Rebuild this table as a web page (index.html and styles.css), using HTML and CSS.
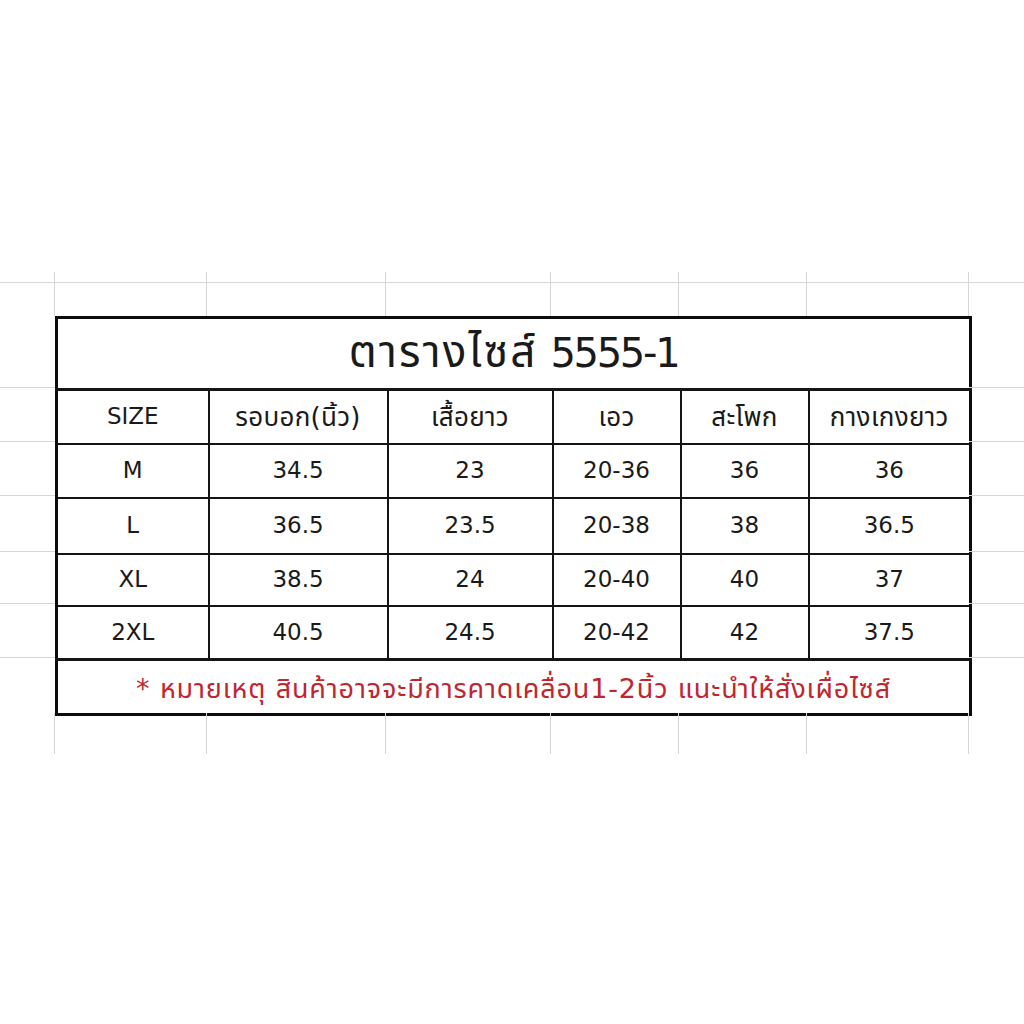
FILE: index.html
```html
<!DOCTYPE html>
<html lang="th">
<head>
<meta charset="utf-8">
<title>ตารางไซส์ 5555-1</title>
<link rel="stylesheet" href="styles.css">
</head>
<body>
<div class="sheet">
  <!-- row 1 : top stub of gridlines -->
  <div class="g gv"></div><div class="g gv"></div><div class="g gv"></div><div class="g gv"></div>
  <div class="g gv"></div><div class="g gv"></div><div class="g gv"></div><div class="g"></div>
  <!-- row 2 -->
  <div class="g gv gh"></div><div class="g gv gh"></div><div class="g gv gh"></div><div class="g gv gh"></div>
  <div class="g gv gh"></div><div class="g gv gh"></div><div class="g gv gh"></div><div class="g gh"></div>

  <!-- left gutter -->
  <div class="gut gut-l r3"></div>
  <div class="gut gut-l r4"></div>
  <div class="gut gut-l r5"></div>
  <div class="gut gut-l r6"></div>
  <div class="gut gut-l r7"></div>
  <div class="gut gut-l r8"></div>
  <div class="gut gut-l r9"></div>

  <table class="size-table">
    <colgroup>
      <col class="c1"><col class="c2"><col class="c3"><col class="c4"><col class="c5"><col class="c6">
    </colgroup>
    <tr class="row-title"><td colspan="6" class="title"><span class="title-th">ตารางไซส์</span> <span class="title-num">5555-1</span></td></tr>
    <tr class="row-54 head"><td>SIZE</td><td class="th">รอบอก(นิ้ว)</td><td class="th">เสื้อยาว</td><td class="th">เอว</td><td class="th">สะโพก</td><td class="th">กางเกงยาว</td></tr>
    <tr class="row-54"><td>M</td><td>34.5</td><td>23</td><td>20-36</td><td>36</td><td>36</td></tr>
    <tr class="row-56"><td>L</td><td>36.5</td><td>23.5</td><td>20-38</td><td>38</td><td>36.5</td></tr>
    <tr class="row-52"><td>XL</td><td>38.5</td><td>24</td><td>20-40</td><td>40</td><td>37</td></tr>
    <tr class="row-54"><td>2XL</td><td>40.5</td><td>24.5</td><td>20-42</td><td>42</td><td>37.5</td></tr>
    <tr class="row-note"><td colspan="6" class="note">* หมายเหตุ สินค้าอาจจะมีการคาดเคลื่อน1-2นิ้ว แนะนำให้สั่งเผื่อไซส์</td></tr>
  </table>

  <!-- right gutter -->
  <div class="gut gut-r r3"></div>
  <div class="gut gut-r r4"></div>
  <div class="gut gut-r r5"></div>
  <div class="gut gut-r r6"></div>
  <div class="gut gut-r r7"></div>
  <div class="gut gut-r r8"></div>
  <div class="gut gut-r r9"></div>

  <!-- bottom stub -->
  <div class="g gv b"></div><div class="g gv b"></div><div class="g gv b"></div><div class="g gv b"></div>
  <div class="g gv b"></div><div class="g gv b"></div><div class="g gv b"></div><div class="g b"></div>
</div>
</body>
</html>
```

FILE: styles.css
```css
html, body {
  margin: 0;
  padding: 0;
  background: #ffffff;
}

body {
  font-family: "DejaVu Sans", "Noto Sans Thai", "Noto Sans Thai UI", "Loma", "Garuda", "Noto Sans", sans-serif;
  color: #1a1a1a;
}

.sheet {
  margin-top: 272px;
  display: grid;
  grid-template-columns: 55px 152px 179px 165px 128px 128px 162px 1fr;
  grid-template-rows: 10px 34px 72px 54px 54px 56px 52px 54px 55px 41px;
}

.g {
  box-sizing: border-box;
}

.gv {
  border-right: 1px solid #d6d6d6;
}

.gh {
  border-top: 1px solid #d6d6d6;
}

.gut {
  box-sizing: border-box;
  border-bottom: 1px solid #d6d6d6;
}

.gut-l { grid-column: 1; }
.gut-r { grid-column: 8; }
.r3 { grid-row: 3; }
.r4 { grid-row: 4; }
.r5 { grid-row: 5; }
.r6 { grid-row: 6; }
.r7 { grid-row: 7; }
.r8 { grid-row: 8; }
.r9 { grid-row: 9; border-bottom: none; }

.b {
  grid-row: 10;
}

.size-table {
  grid-column: 2 / 8;
  grid-row: 3 / 10;
  width: 100%;
  height: 100%;
  border-collapse: collapse;
  table-layout: fixed;
  border: 3px solid #0c0c0c;
}

.c1 { width: 152px; }
.c2 { width: 179px; }
.c3 { width: 165px; }
.c4 { width: 128px; }
.c5 { width: 128px; }
.c6 { width: 162px; }

.size-table td {
  border: 2px solid #151515;
  text-align: center;
  vertical-align: middle;
  padding: 0;
  font-size: 23px;
  line-height: 1;
}

.size-table td.th {
  font-size: 26px;
  letter-spacing: 0.3px;
}

.row-title { height: 72px; }
.row-54 { height: 54px; }
.row-56 { height: 56px; }
.row-52 { height: 52px; }
.row-note { height: 55px; }

.size-table td.title {
  font-size: 40px;
  border-bottom-width: 3px;
  padding-bottom: 4px;
}

.title-th {
  font-size: 44px;
  letter-spacing: 2.2px;
}

.title-num {
  letter-spacing: -2.3px;
}

.row-note td {
  border-top-width: 3px;
}

.size-table td.note {
  color: #c0262d;
  font-size: 27px;
  letter-spacing: 0.85px;
  padding-top: 2px;
}
```
